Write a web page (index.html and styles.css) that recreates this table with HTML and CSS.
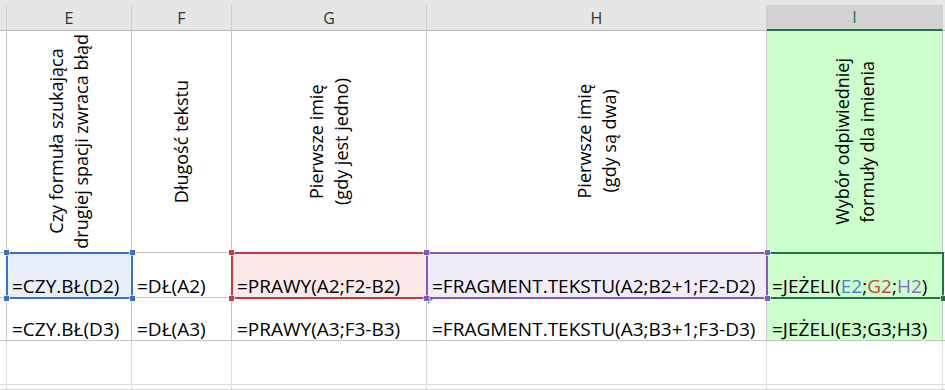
FILE: index.html
```html
<!DOCTYPE html>
<html lang="pl">
<head>
<meta charset="utf-8">
<title>Arkusz</title>
<link rel="stylesheet" href="styles.css">
</head>
<body>
<div class="topstrip"></div>
<div class="sheet">
  <div class="hd"></div>
  <div class="hd">E</div>
  <div class="hd">F</div>
  <div class="hd">G</div>
  <div class="hd">H</div>
  <div class="hd on">I</div>
  <div class="hd end"></div>

  <div class="c"></div>
  <div class="c v"><div class="vt">Czy formuła szukająca<br>drugiej spacji zwraca błąd</div></div>
  <div class="c v"><div class="vt">Długość tekstu</div></div>
  <div class="c v"><div class="vt">Pierwsze imię<br>(gdy jest jedno)</div></div>
  <div class="c v"><div class="vt">Pierwsze imię<br>(gdy są dwa)</div></div>
  <div class="c v green"><div class="vt">Wybór odpiwiedniej<br>formuły dla imienia</div></div>
  <div class="c end"></div>

  <div class="c"></div>
  <div class="c fill-blue">=CZY.BŁ(D2)<div class="selbox blue"><span class="k tl"></span><span class="k tr"></span><span class="k bl"></span><span class="k br"></span></div></div>
  <div class="c">=DŁ(A2)</div>
  <div class="c fill-red">=PRAWY(A2;F2-B2)<div class="selbox red"><span class="k tl"></span><span class="k tr"></span><span class="k bl"></span><span class="k br"></span></div></div>
  <div class="c fill-purple">=FRAGMENT.TEKSTU(A2;B2+1;F2-D2)<div class="selbox purple"><span class="k tl"></span><span class="k tr"></span><span class="k bl"></span><span class="k br"></span></div></div>
  <div class="c green">=JEŻELI(<span class="r-blue">E2</span>;<span class="r-red">G2</span>;<span class="r-purple">H2</span>)<div class="selbox active"><span class="k br"></span></div></div>
  <div class="c end"></div>

  <div class="c"></div>
  <div class="c">=CZY.BŁ(D3)</div>
  <div class="c">=DŁ(A3)</div>
  <div class="c">=PRAWY(A3;F3-B3)</div>
  <div class="c"><span class="tri"></span>=FRAGMENT.TEKSTU(A3;B3+1;F3-D3)</div>
  <div class="c green">=JEŻELI(E3;G3;H3)</div>
  <div class="c end"></div>

  <div class="c lt"></div>
  <div class="c lt"></div>
  <div class="c lt"></div>
  <div class="c lt"></div>
  <div class="c lt"></div>
  <div class="c lt"></div>
  <div class="c lt end"></div>

  <div class="c lt"></div>
  <div class="c lt"></div>
  <div class="c lt"></div>
  <div class="c lt"></div>
  <div class="c lt"></div>
  <div class="c lt"></div>
  <div class="c lt end"></div>
</div>
</body>
</html>
```

FILE: styles.css
```css
html, body {
  margin: 0;
  padding: 0;
}
body {
  width: 945px;
  height: 390px;
  overflow: hidden;
  background: #ffffff;
  font-family: "Open Sans", "Noto Sans", sans-serif;
  color: #000;
}
.topstrip {
  height: 5px;
  background: #e6e6e6;
}
.sheet {
  display: grid;
  grid-template-columns: 7px 125px 100px 195px 340px 176px 2px;
  grid-template-rows: 26px 222px 45px 43px 44px 5px;
}
.hd {
  box-sizing: border-box;
  background: #e6e6e6;
  border-right: 1px solid #cfcfcf;
  border-bottom: 1px solid #b8b8b8;
  display: flex;
  align-items: center;
  justify-content: center;
  font-size: 16px;
  line-height: 20px;
  color: #333;
}
.hd.on {
  background: #d2d2d2;
  color: #217346;
  border-bottom: 2px solid #217346;
}
.hd.end {
  border-right: none;
  background: #e9e9e9;
}
.c {
  box-sizing: border-box;
  position: relative;
  border-right: 1px solid #c6c6c6;
  border-bottom: 1px solid #c6c6c6;
  display: flex;
  align-items: flex-end;
  padding: 0 0 0 5px;
  font-size: 19px;
  line-height: 22px;
  white-space: nowrap;
}
.c.end {
  border-right: none;
  padding: 0;
}
.c.lt {
  border-color: #dcdcdc;
}
.v {
  align-items: center;
  justify-content: center;
  padding: 0;
}
.vt {
  writing-mode: vertical-rl;
  transform: rotate(180deg);
  text-align: center;
  font-size: 18px;
  line-height: 25px;
  white-space: nowrap;
}
.green {
  background: #ccffcc;
}
.fill-blue { background: #e8eef9; }
.fill-red { background: #fbe8e9; }
.fill-purple { background: #f0ecf8; }

.selbox {
  position: absolute;
  top: -1px;
  left: -1px;
  right: -2px;
  bottom: -2px;
  border: 2px solid currentColor;
  z-index: 2;
}
.selbox.blue { color: #3b70c8; }
.selbox.red { color: #c8373d; }
.selbox.purple { color: #8458c0; z-index: 3; }
.selbox.active { color: #217346; z-index: 1; }
.k {
  position: absolute;
  width: 5px;
  height: 5px;
  background: currentColor;
  box-shadow: 0 0 0 1px rgba(255,255,255,0.6);
}
.k.tl { left: -4px; top: -4px; }
.k.tr { right: -4px; top: -4px; }
.k.bl { left: -4px; bottom: -4px; }
.k.br { right: -4px; bottom: -4px; }

.r-blue { color: #4a7fd0; }
.r-red { color: #c8453f; }
.r-purple { color: #8a6cc0; }

.tri {
  position: absolute;
  left: 1px;
  top: 0;
  width: 0;
  height: 0;
  border-top: 6px solid #1f8a3a;
  border-right: 6px solid transparent;
}
```
